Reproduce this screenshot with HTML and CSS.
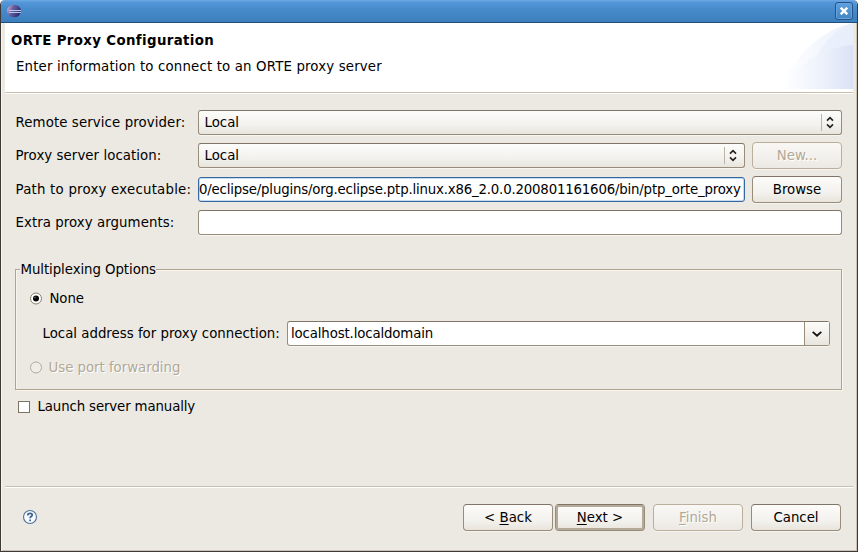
FILE: index.html
```
<!DOCTYPE html>
<html lang="en">
<head>
<meta charset="utf-8">
<title>ORTE Proxy Configuration</title>
<link rel="stylesheet" href="styles.css">
</head>
<body>
<div class="window">
  <header class="titlebar">
    <svg class="logo" width="14" height="14" viewBox="0 0 14 14">
      <defs>
        <linearGradient id="orb" x1="0" x2="1" y1=".3" y2=".7"><stop offset="0" stop-color="#d4a5c8"/><stop offset=".35" stop-color="#6860a4"/><stop offset="1" stop-color="#25246b"/></linearGradient>
      </defs>
      <ellipse cx="7" cy="7" rx="7" ry="6.3" fill="url(#orb)"/>
      <path d="M2 6.5h12M2 8.5h12" stroke="#b9cbe9"/>
    </svg>
    <button class="close" aria-label="Close">
      <svg width="8" height="8" viewBox="0 0 8 8"><path d="M.7 .7l6.6 6.6M7.3 .7L.7 7.3" stroke="#fff" stroke-width="2.4"/></svg>
    </button>
  </header>
  <main class="content">
    <section class="banner">
      <div class="heading">
        <h1>ORTE Proxy Configuration</h1>
        <p>Enter information to connect to an ORTE proxy server</p>
      </div>
      <svg class="swoosh" width="73" height="66" viewBox="0 0 73 66">
        <defs>
          <linearGradient id="s1"><stop offset="0" stop-color="#fff"/><stop offset="1" stop-color="#eaf0fb"/></linearGradient>
          <linearGradient id="s2"><stop offset="0" stop-color="#fff"/><stop offset=".55" stop-color="#edf2fb"/><stop offset="1" stop-color="#dbe2f6"/></linearGradient>
        </defs>
        <path d="M0 66C13 34 42 6 73 0V66Z" fill="url(#s1)"/>
        <path d="M36 36C44 18 58 5 73 0V30Z" fill="#e6edfa" opacity=".6"/>
        <path d="M2 66C20 38 46 24 73 22V66Z" fill="url(#s2)"/>
      </svg>
    </section>
    <form class="form">
      <div class="row"><label class="remote">Remote service provider:</label>
        <div class="select"><span>Local</span><svg class="spin" width="20" height="17" viewBox="0 0 20 17"><path d="M.5 0v17" stroke="#bab5a6"/><path d="M6 6.6L9 3.6l3 3M6 10.4l3 3 3-3" fill="none" stroke="#222" stroke-width="1.6"/></svg></div></div>
      <div class="row tall"><label>Proxy server location:</label>
        <div class="select"><span>Local</span><svg class="spin" width="20" height="17" viewBox="0 0 20 17"><path d="M.5 0v17" stroke="#bab5a6"/><path d="M6 6.6L9 3.6l3 3M6 10.4l3 3 3-3" fill="none" stroke="#222" stroke-width="1.6"/></svg></div>
        <button class="btn" disabled>New...</button></div>
      <div class="row tall"><label class="path">Path to proxy executable:</label>
        <div class="input focused"><span>0/eclipse/plugins/org.eclipse.ptp.linux.x86_2.0.0.200801161606/bin/ptp_orte_proxy</span></div>
        <button class="btn" type="button">Browse</button></div>
      <div class="row"><label>Extra proxy arguments:</label><div class="input"></div></div>
    </form>
    <section class="group">
      <h2>Multiplexing Options</h2>
      <div class="option none"><svg class="radio" width="13" height="13" viewBox="0 0 13 13"><circle cx="7" cy="6.5" r="5.5" fill="#fff" stroke="#887e6d"/><circle cx="7" cy="6.5" r="3" fill="#080808"/><circle cx="6" cy="5.5" r=".8" fill="#777"/></svg><span>None</span></div>
      <div class="address"><label>Local address for proxy connection:</label>
        <div class="combo"><span>localhost.localdomain</span><div class="drop"><svg width="10" height="6" viewBox="0 0 10 6"><path d="M.7 .8L5 4.7 9.3 .8" fill="none" stroke="#111" stroke-width="1.8"/></svg></div></div></div>
      <div class="option forwarding"><svg class="radio" width="13" height="13" viewBox="0 0 13 13"><circle cx="7" cy="6.5" r="5.5" fill="#f0ede7" stroke="#b5aa99"/></svg><span>Use port forwarding</span></div>
    </section>
    <div class="manual"><i class="check"></i><span>Launch server manually</span></div>
    <footer class="footer">
      <svg class="help" width="16" height="16" viewBox="0 0 16 16"><circle cx="8" cy="8" r="6.5" fill="#f7fafe" stroke="#50709b" stroke-width="1.1"/><path d="M5.8 6.6V6C5.8 4.8 6.7 4.4 8 4.4S10.3 5 10.3 6.1 8.1 7.5 8.1 9.3M8.1 10.4V12.2" fill="none" stroke="#3d608e" stroke-width="1.7"/></svg>
      <button class="btn back"><span>&lt; <u>B</u>ack</span></button>
      <button class="btn next"><span><u>N</u>ext &gt;</span></button>
      <button class="btn finish" disabled><span><u>F</u>inish</span></button>
      <button class="btn cancel">Cancel</button>
    </footer>
  </main>
</div>
</body>
</html>
```
FILE: styles.css
```
* { box-sizing: border-box; }
body { margin: 0; background: #fff; }
svg { display: block; flex: none; }
.window {
  width: 858px; height: 552px; display: flex; flex-direction: column;
  border: 1px solid #3d3936; border-top: 0; border-radius: 5px 5px 0 0; overflow: hidden;
  background: #ece9e2; color: #000;
  font: 13.33px/17px "DejaVu Sans", sans-serif; white-space: nowrap;
}
.titlebar {
  height: 23px; flex: none; display: flex; align-items: center; justify-content: space-between;
  padding: 0 4px 0 6px;
  background: linear-gradient(#70aae5, #5598da 2px, #478bcb 9px, #3b7fbd);
  border-bottom: 1px solid #214e7a;
}
.close {
  width: 18px; height: 18px; padding: 0; display: grid; place-items: center;
  border: 1px solid #24558a; border-radius: 3px; background: linear-gradient(#60a0dc, #4384c3);
  box-shadow: inset 0 0 0 1px #66a2dc;
}
.content {
  flex: 1; display: flex; flex-direction: column; padding: 0 4px 0 3px;
  border: solid #f8f6f2; border-width: 0 0 0 1px;
  box-shadow: inset -1px -1px #cbc2b5;
}
.banner {
  height: 71px; flex: none; display: flex; justify-content: space-between;
  background: #fff; border-bottom: 1px solid #fff;
  box-shadow: inset 0 -1px #c9bcab;
}
.heading { padding: 9px 0 0 6px; }
h1, h2, p { margin: 0; font-size: inherit; }
h1 { letter-spacing: .37px; }
p { margin: 9px 0 0 5px; letter-spacing: .155px; }
.form { display: flex; flex-direction: column; gap: 7px; padding: 16px 11px 0 10px; }
.row { height: 25px; display: flex; align-items: center; gap: 7px; }
.tall { height: 27px; }
.row label { width: 176px; flex: none; padding-left: .5px; letter-spacing: .06px; }
.row .remote { letter-spacing: .1px; }
.row .path { letter-spacing: .22px; }
.select, .input, .combo {
  flex: 1; min-width: 0; height: 25px; display: flex; align-items: center;
  border: 1px solid #988c7a; border-top-color: #7f7465; border-radius: 3px;
  box-shadow: 0 1px #f8f6f1;
}
.select { justify-content: space-between; padding: 0 0 0 5.5px; background: linear-gradient(#fcfcfa, #f3f2ee 60%, #e8e5de); }
.input, .combo { background: #fff; }
.input.focused { border-color: #3668a0; box-shadow: inset 0 0 0 1px #c2d9ef; overflow: hidden; }
.focused span { letter-spacing: -.19px; }
.btn {
  width: 90px; height: 27px; flex: none; padding: 0; font: inherit; color: #000;
  border: 1px solid #988c7a; border-top-color: #7f7465; border-radius: 4px;
  background: linear-gradient(#fcfcfa, #f3f1ed 65%, #e8e4dc); box-shadow: 0 1px #f7f4ef;
}
.btn:disabled { color: #b2a896; text-shadow: 1px 1px #fff; border-color: #bbae9d; background: linear-gradient(#f8f7f4, #f1efeb 65%, #ece8e4); }
.group {
  height: 121px; flex: none; margin: 34px 11px 0 10px; padding: 0 11px 0 13px;
  border: 1px solid #afa491; box-shadow: 1px 1px #f8f5ef, inset 1px 1px #f8f5ef;
}
h2 { width: max-content; margin: -9px 0 0 -9px; padding-left: .5px; background: #ece9e2; font-weight: normal; letter-spacing: -.07px; }
.option { display: flex; align-items: center; gap: 7.5px; }
.none { margin-top: 12px; letter-spacing: -.1px; }
.address { display: flex; align-items: center; margin: 14px 0 0 13px; }
.address label { width: 245px; padding-left: .5px; }
.combo { justify-content: space-between; padding-left: 3px; letter-spacing: -.14px; }
.drop { width: 25px; height: 23px; display: grid; place-items: center; border-left: 1px solid #988c7a; background: linear-gradient(#fcfcfa, #e9e6df); }
.forwarding { margin-top: 13px; gap: 6.5px; color: #b2a896; text-shadow: 1px 1px #fff; letter-spacing: -.03px; }
.manual { display: flex; align-items: center; gap: 7.5px; margin: 8px 0 0 13px; letter-spacing: -.13px; }
.check { width: 12px; height: 12px; border: 1px solid #7d7362; background: #fff; }
.footer {
  height: 65px; margin: auto 0 0; flex: none; display: flex; align-items: flex-start;
  padding: 17px 12px 0 17px; border-top: 1px solid #c5bfb2; box-shadow: inset 0 1px #fff;
}
.help { margin-top: 5px; }
.footer .back { margin-left: auto; }
.footer .next { margin-left: 2px; box-shadow: inset 0 0 0 2px #b5a999; }
.footer .finish, .footer .cancel { margin-left: 8px; }
u { text-underline-offset: 2px; text-decoration-thickness: 1px; }
```
